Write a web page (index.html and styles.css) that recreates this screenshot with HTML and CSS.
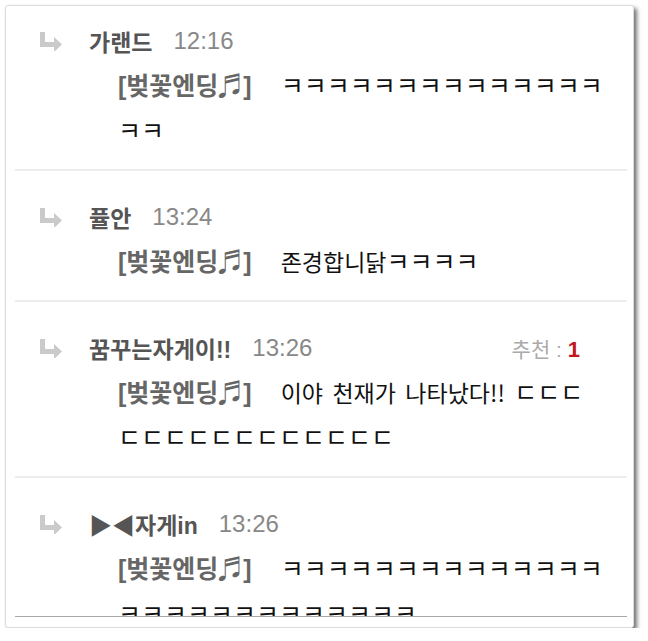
FILE: index.html
```html
<!DOCTYPE html>
<html lang="ko">
<head>
<meta charset="utf-8">
<link rel="stylesheet" href="styles.css">
</head>
<body>
<div class="card">
  <div class="list">
    <div class="item">
      <div class="head">
        <svg class="reply" viewBox="0 0 26 20" width="26" height="20"><path d="M2 1h5v10h9V6l8 7.5-8 7.5v-5H2z" fill="#cacaca"/></svg>
        <span class="name">가랜드</span>
        <span class="time">12:16</span>
      </div>
      <div class="body"><span class="tag">[벚꽃엔딩<span class="note">♬</span>]</span><span class="jm">ㅋㅋㅋㅋㅋㅋㅋㅋㅋㅋㅋㅋㅋㅋㅋㅋ</span></div>
    </div>
    <div class="item">
      <div class="head">
        <svg class="reply" viewBox="0 0 26 20" width="26" height="20"><path d="M2 1h5v10h9V6l8 7.5-8 7.5v-5H2z" fill="#cacaca"/></svg>
        <span class="name">퓰안</span>
        <span class="time">13:24</span>
      </div>
      <div class="body"><span class="tag">[벚꽃엔딩<span class="note">♬</span>]</span>존경합니닭<span class="jm">ㅋㅋㅋㅋ</span></div>
    </div>
    <div class="item">
      <div class="head">
        <svg class="reply" viewBox="0 0 26 20" width="26" height="20"><path d="M2 1h5v10h9V6l8 7.5-8 7.5v-5H2z" fill="#cacaca"/></svg>
        <span class="name">꿈꾸는자게이!!</span>
        <span class="time">13:26</span>
        <span class="rec">추천 : <b>1</b></span>
      </div>
      <div class="body"><span class="tag">[벚꽃엔딩<span class="note">♬</span>]</span>이야 천재가 나타났다!! <span class="jm">ㄷㄷㄷㄷㄷㄷㄷㄷㄷㄷㄷㄷㄷㄷㄷ</span></div>
    </div>
    <div class="item">
      <div class="head">
        <svg class="reply" viewBox="0 0 26 20" width="26" height="20"><path d="M2 1h5v10h9V6l8 7.5-8 7.5v-5H2z" fill="#cacaca"/></svg>
        <span class="name">▶◀자게in</span>
        <span class="time">13:26</span>
      </div>
      <div class="body"><span class="tag">[벚꽃엔딩<span class="note">♬</span>]</span><span class="jm">ㅋㅋㅋㅋㅋㅋㅋㅋㅋㅋㅋㅋㅋㅋㅋㅋㅋㅋㅋㅋㅋㅋㅋㅋㅋㅋㅋ</span></div>
    </div>
  </div>
</div>
</body>
</html>
```
FILE: styles.css
```css
html, body {
  margin: 0;
  padding: 0;
  background: #fff;
}
body {
  font-family: "Liberation Sans", "Noto Sans CJK KR", sans-serif;
}
.card {
  margin: 5px 0 0 5px;
  width: 612px;
  height: 621px;
  border: 1px solid #dcdcdc;
  border-radius: 3px;
  box-shadow: 3px 3px 4px rgba(0, 0, 0, 0.55);
  background: #fff;
  padding: 0 6px 0 9px;
  box-sizing: content-box;
  display: flex;
  flex-direction: column;
}
.list {
  height: 610px;
  overflow: hidden;
  border-bottom: 1px solid #a8a8a8;
}
.item {
  padding: 23px 0 16px;
  border-bottom: 2px solid #ededed;
}
.item:first-child {
  padding-top: 12px;
}
.head {
  display: flex;
  align-items: center;
  height: 45px;
  padding-left: 23px;
  padding-right: 47px;
}
.reply {
  flex: none;
  margin-right: 25px;
}
.name {
  font-weight: bold;
  color: #555;
  font-size: 23px;
}
.time {
  color: #888;
  font-size: 24px;
  margin-left: 21px;
}
.rec {
  margin-left: auto;
  color: #aaa;
  font-size: 21px;
}
.rec b {
  color: #c4161c;
  font-size: 22px;
}
.body {
  padding-left: 103px;
  padding-right: 24px;
  font-size: 23px;
  line-height: 45px;
  word-spacing: 3px;
  color: #111;
  font-family: "Noto Sans CJK KR", sans-serif;
}
.jm {
  font-size: 25px;
  line-height: 1;
}
.tag {
  font-weight: bold;
  color: #666;
  font-size: 25px;
  line-height: 1;
  margin-right: 29px;
  font-family: "Liberation Sans", "Noto Sans CJK KR", sans-serif;
}
.note {
  font-family: "Noto Sans CJK KR", sans-serif;
}
```
